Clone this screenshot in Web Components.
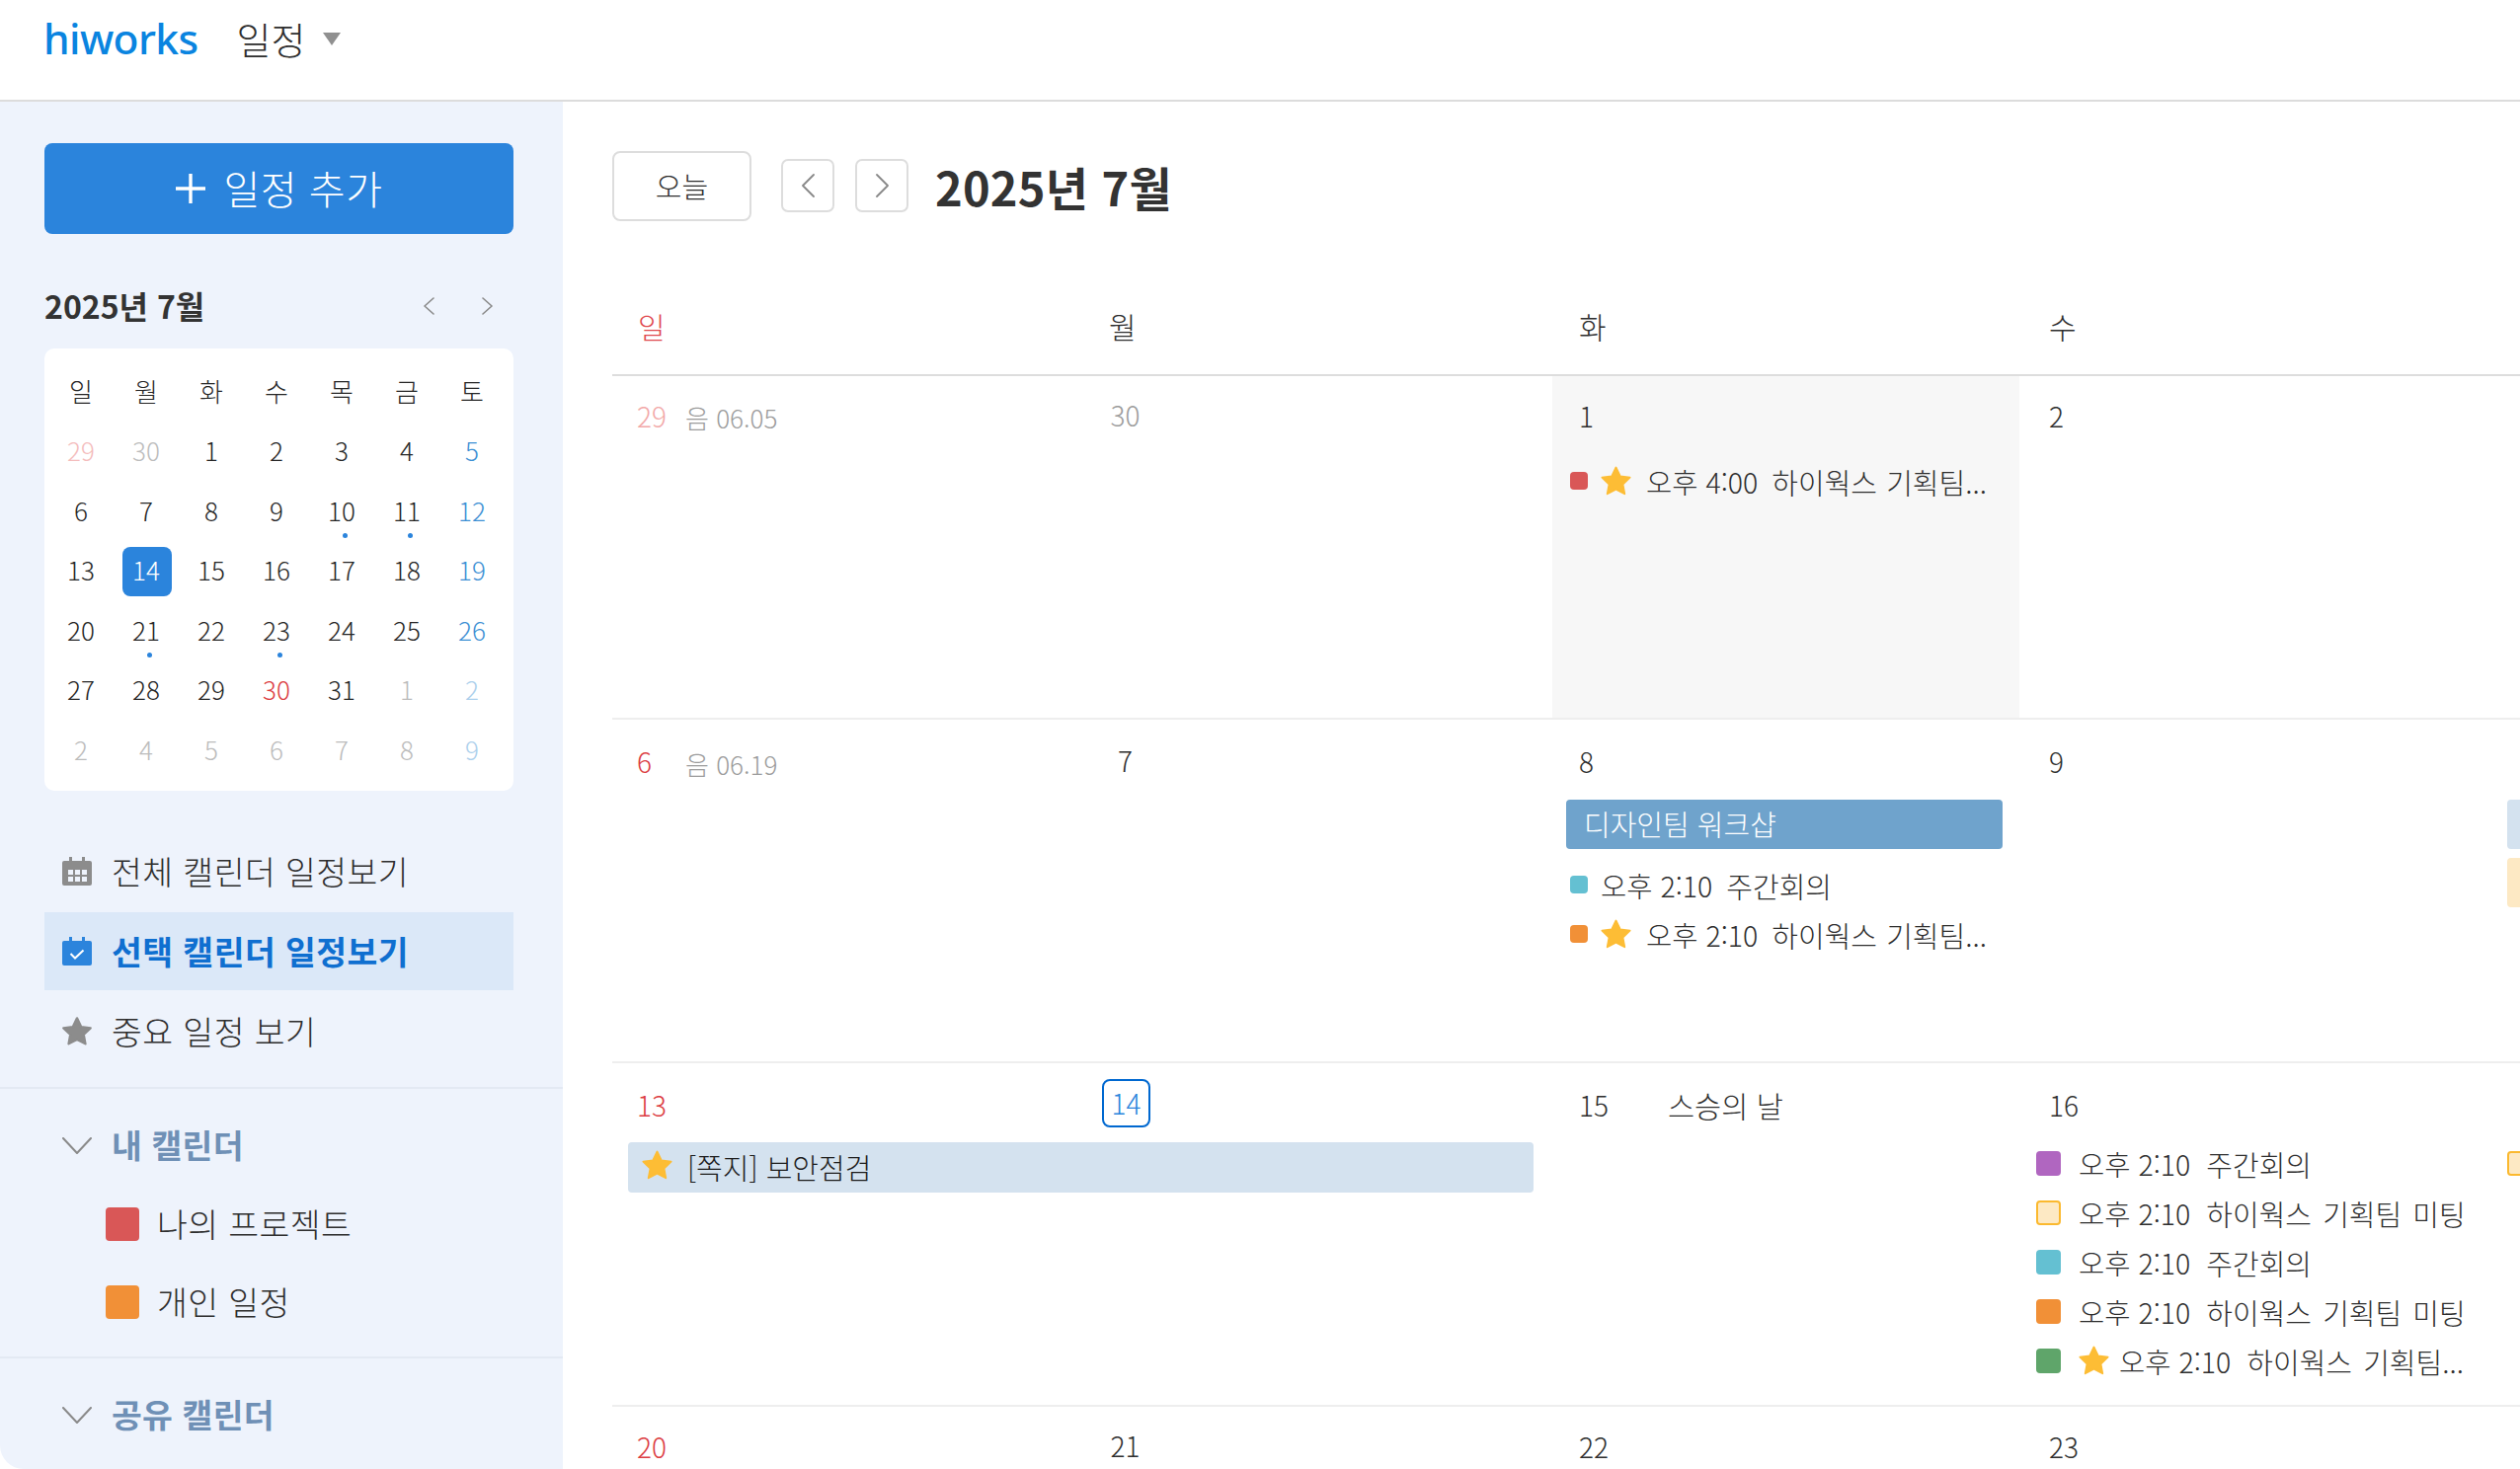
<!DOCTYPE html>
<html lang="ko"><head><meta charset="utf-8"><title>일정</title>
<style>
html,body{margin:0;padding:0;height:100%;overflow:hidden;background:#fff}
body{font-family:"Noto Sans CJK KR","Noto Sans",sans-serif;font-weight:300;color:#222;width:2552px;height:1488px}
</style></head><body>
<hw-app>
  <hw-topbar slot="top"></hw-topbar>
  <hw-sidebar slot="side">
    <hw-add-button></hw-add-button>
    <hw-minical></hw-minical>
    <hw-nav>
      <hw-nav-item icon="all">전체 캘린더 일정보기</hw-nav-item>
      <hw-nav-item icon="check" active>선택 캘린더 일정보기</hw-nav-item>
      <hw-nav-item icon="star">중요 일정 보기</hw-nav-item>
    </hw-nav>
    <hw-section title="내 캘린더">
      <hw-cal-item color="#d95757">나의 프로젝트</hw-cal-item>
      <hw-cal-item color="#f19037">개인 일정</hw-cal-item>
    </hw-section>
    <hw-section title="공유 캘린더"></hw-section>
  </hw-sidebar>
  <hw-month slot="main">
    <hw-week style="--ny:-2px">
      <hw-day num="29" tone="dimsun" col="1" lunar="음 06.05"></hw-day>
      <hw-day num="30" tone="dim" col="2" center></hw-day>
      <hw-day num="1" col="3" shade>
        <hw-event color="#d95757" small star time="오후 4:00">하이웍스 기획팀...</hw-event>
      </hw-day>
      <hw-day num="2" col="4"></hw-day>
      <hw-day col="5"></hw-day>
    </hw-week>
    <hw-week>
      <hw-day num="6" tone="sun" col="1" lunar="음 06.19" style="--ly:3px"></hw-day>
      <hw-day num="7" col="2" center></hw-day>
      <hw-day num="8" col="3" head="81">
        <hw-bar color="#6fa3cc" text="#fff" style="margin:0 20px 13px 14px">디자인팀 워크샵</hw-bar>
        <hw-event color="#64c0d2" small time="오후 2:10">주간회의</hw-event>
        <hw-event color="#f19037" small star time="오후 2:10">하이웍스 기획팀...</hw-event>
      </hw-day>
      <hw-day num="9" col="4"></hw-day>
      <hw-day col="5" head="81">
        <hw-bar color="#d4e2ef" style="margin:0 0 9px 15px"></hw-bar>
        <hw-bar color="#fde9c4" style="margin:0 0 0 15px"></hw-bar>
      </hw-day>
    </hw-week>
    <hw-week>
      <hw-day num="13" tone="sun" col="1" head="78"></hw-day>
      <hw-day num="14" tone="today" col="2" center head="78"></hw-day>
      <hw-day num="15" col="3" label="스승의 날" head="78"></hw-day>
      <hw-day num="16" col="4" head="78">
        <hw-event color="#b066c0" time="오후 2:10">주간회의</hw-event>
        <hw-event color="#fde9c4" edge="#fbb92f" time="오후 2:10">하이웍스 기획팀 미팅</hw-event>
        <hw-event color="#64c0d2" time="오후 2:10">주간회의</hw-event>
        <hw-event color="#f19037" time="오후 2:10">하이웍스 기획팀 미팅</hw-event>
        <hw-event color="#5fa56a" star time="오후 2:10">하이웍스 기획팀...</hw-event>
      </hw-day>
      <hw-day col="5" head="78"><hw-event color="#fde9c4" edge="#fbb92f" style="--pad:15px"></hw-event></hw-day>
      <hw-bar color="#d4e2ef" star style="grid-column:1/3;grid-row:1;margin:80px 19px 0 16px;--h:51px">[쪽지] 보안점검</hw-bar>
    </hw-week>
    <hw-week style="--ny:-2px">
      <hw-day num="20" tone="sun" col="1"></hw-day>
      <hw-day num="21" col="2" center></hw-day>
      <hw-day num="22" col="3"></hw-day>
      <hw-day num="23" col="4"></hw-day>
      <hw-day col="5"></hw-day>
    </hw-week>
  </hw-month>
</hw-app>
<script>
const STAR='M12 2.6l2.9 6 6.6.9-4.8 4.6 1.2 6.5L12 17.5l-5.9 3.1 1.2-6.5L2.5 9.5l6.6-.9z';
const STARVB='1.6 1.7 20.8 20';
function def(name,css,html,init){
  customElements.define(name,class extends HTMLElement{
    constructor(){super();this.attachShadow({mode:'open'});}
    connectedCallback(){
      const h=typeof html==='function'?html(this):html;
      this.shadowRoot.innerHTML='<style>'+css+'</style>'+h;
      if(init)init(this,this.shadowRoot);
    }
  });
}
const chev=(d,w,h,c,sw)=>`<svg width="${w}" height="${h}" viewBox="0 0 ${w} ${h}" fill="none" stroke="${c}" stroke-width="${sw}" stroke-linecap="round" stroke-linejoin="round"><polyline points="${d}"/></svg>`;

def('hw-app',`:host{display:grid;grid-template-columns:570px 1fr;grid-template-rows:103px 1385px;width:2552px;height:1488px;overflow:hidden}`,
 `<slot name="top"></slot><slot name="side"></slot><slot name="main"></slot>`);

def('hw-topbar',`:host{display:flex;grid-column:1/3;align-items:flex-start;height:103px;box-sizing:border-box;border-bottom:2px solid #dcdcdc;background:#fff;padding-left:44px}
 .logo{font:500 42.5px/78px "Noto Sans",sans-serif;color:#0a84e0;letter-spacing:-.6px}
 .t{font-size:38px;line-height:78px;color:#2e2e2e;margin-left:39px}
 .c{width:0;height:0;border-left:9px solid transparent;border-right:9px solid transparent;border-top:13px solid #909090;margin:33px 0 0 17px}`,
 `<span class="logo">hiworks</span><span class="t">일정</span><span class="c"></span>`);

def('hw-sidebar',`:host{display:block;background:#eef3fc;height:1385px;border-bottom-left-radius:24px;overflow:hidden;padding-top:42px;box-sizing:border-box}`,`<slot></slot>`);

def('hw-add-button',`:host{display:flex;align-items:center;justify-content:center;margin-left:45px;width:475px;height:92px;border-radius:8px;background:#2b84dc;color:#fff;font-size:40px;gap:19px;letter-spacing:.5px}
 svg{display:block}span{line-height:92px;margin-top:-2px}`,
 `<svg width="30" height="30" viewBox="0 0 30 30"><path d="M15 0v30M0 15h30" stroke="#fff" stroke-width="3.4"/></svg><span>일정 추가</span>`);

def('hw-minical',`:host{display:block;margin-left:45px;width:475px;margin-top:43px}
 .h{display:flex;align-items:center;height:60px;font-weight:700;font-size:32px;color:#333}
 .h b{font-weight:700;flex:1;margin-top:-3px}.h svg{display:block}.h svg+svg{margin:0 21px 0 48px}
 .card{background:#fff;border-radius:10px;margin-top:13px;height:448px;box-sizing:border-box;padding:12px 0 0 4px}
 .g{display:grid;grid-template-columns:repeat(7,66px);grid-auto-rows:60.5px;font-size:26px;color:#262626}
 .c{position:relative;display:flex;align-items:center;justify-content:center}
 .today{color:#fff}.today::before{content:"";position:absolute;left:calc(50% - 24px);top:calc(50% - 23px);width:50px;height:50px;border-radius:8px;background:#2b84dc}
 .c span{position:relative}
 .dot::after{content:"";position:absolute;width:5px;height:5px;border-radius:50%;background:#2b84dc;left:calc(50% + .5px);top:calc(50% + 24px)}
 .s{color:#3d90d4}.r{color:#dc3c42}.d{color:#bcbcbc}.ds{color:#f4bcbc}.dsa{color:#acd0ec}`,
 el=>{
  const wk=['일','월','화','수','목','금','토'];
  const rows=[['29:ds','30:d','1','2','3','4','5:s'],['6','7','8','9','10:dot','11:dot','12:s'],['13','14:today','15','16','17','18','19:s'],['20','21:dot','22','23:dot','24','25','26:s'],['27','28','29','30:r','31','1:d','2:dsa'],['2:d','4:d','5:d','6:d','7:d','8:d','9:dsa']];
  let cells=wk.map(w=>`<div class="c"><span>${w}</span></div>`).join('');
  rows.forEach(r=>r.forEach(v=>{const [n,k]=v.split(':');cells+=`<div class="c ${k||''}"><span>${n}</span></div>`;}));
  return `<div class="h"><b>2025년 7월</b>${chev('10,1 1,9 10,17',11,18,'#8a8a8a',1.6)}${chev('1,1 10,9 1,17',11,18,'#8a8a8a',1.6)}</div><div class="card"><div class="g">${cells}</div></div>`;
 });

def('hw-nav',`:host{display:flex;flex-direction:column;gap:2px;margin:42px 0 17px 45px;width:475px}`,`<slot></slot>`);

const ICONS={
 all:`<svg width="30" height="29" viewBox="0 0 30 29"><path d="M7 0h3v4h10V0h3v4h5a2 2 0 0 1 2 2v21a2 2 0 0 1-2 2H2a2 2 0 0 1-2-2V6a2 2 0 0 1 2-2h5z" fill="#8c8c8c"/><path fill="#eef3fc" d="M6 13h5v5H6zM13 13h5v5h-5zM20 13h5v5h-5zM6 20h5v5H6zM13 20h5v5h-5zM20 20h5v5h-5z"/></svg>`,
 check:`<svg width="30" height="29" viewBox="0 0 30 29"><path d="M7 0h3v4h10V0h3v4h5a2 2 0 0 1 2 2v21a2 2 0 0 1-2 2H2a2 2 0 0 1-2-2V6a2 2 0 0 1 2-2h5z" fill="#2b84dc"/><path d="M8.5 17l4.5 4.5 8.5-8" fill="none" stroke="#fff" stroke-width="2"/></svg>`,
 star:`<svg width="30" height="29" viewBox="${STARVB}"><path d="${STAR}" fill="#8c8c8c" stroke="#8c8c8c" stroke-width="1.6" stroke-linejoin="round"/></svg>`
};
def('hw-nav-item',`:host{display:flex;align-items:center;height:79px;padding-left:18px;font-size:33.5px;color:#2e2e2e;gap:20px;letter-spacing:.45px}
 :host([active]){background:#dbe8f8;color:#0f6fd0;font-weight:700}
 svg{display:block;flex:none}
 span{margin-top:-3px}`,
 el=>`${ICONS[el.getAttribute('icon')]}<span><slot></slot></span>`);

def('hw-section',`:host{display:block;border-top:2px solid #e3e9f3;padding:28px 0 16px}
 .h{display:flex;align-items:center;height:58px;padding-left:63px;gap:20px;font-size:33.5px;font-weight:700;color:#6f90b6;letter-spacing:.2px}
 .h span{margin-top:-3px}
 svg{display:block}.l{margin-top:11px}`,
 el=>`<div class="h">${chev('1,1 15,16 29,1',30,17,'#8a8a8a',2)}<span>${el.getAttribute('title')}</span></div><div class="l"><slot></slot></div>`);

def('hw-cal-item',`:host{display:flex;align-items:center;height:79px;padding-left:107px;gap:18px;font-size:33.5px;color:#2e2e2e;letter-spacing:.4px}
 i{display:block;width:34px;height:34px;border-radius:4px}
 span{margin-top:-3px}`,
 el=>`<i style="background:${el.getAttribute('color')}"></i><span><slot></slot></span>`);

def('hw-month',`:host{display:block;height:1385px;overflow:hidden;padding:50px 0 0 50px;box-sizing:border-box}
 .bar{display:flex;align-items:center;height:70px}
 .today{width:141px;height:71px;box-sizing:border-box;border:2px solid #ddd;border-radius:8px;display:flex;align-items:center;justify-content:center;font-size:29px;color:#2e2e2e}
 .nav{width:54px;height:54px;box-sizing:border-box;border:2px solid #ddd;border-radius:7px;display:flex;align-items:center;justify-content:center}
 .nav svg{display:block}
 h1{margin:0 0 0 27px;font-size:47px;font-weight:700;color:#333;letter-spacing:.2px}
 .head{display:grid;grid-template-columns:repeat(4,476px) 1fr;margin-top:71px;height:71px;padding-bottom:14px;border-bottom:2px solid #ddd;font-size:30px;color:#2e2e2e;align-items:center}
 .head span{padding-left:27px}.head .sun{color:#e0484e;padding-left:26px}`,
 `<div class="bar"><div class="today">오늘</div><div class="nav" style="margin-left:30px">${chev('13,1 2,12 13,23',15,24,'#888',1.8)}</div><div class="nav" style="margin-left:21px">${chev('2,1 13,12 2,23',15,24,'#888',1.8)}</div><h1>2025년 7월</h1></div>
 <div class="head"><span class="sun">일</span><span>월</span><span>화</span><span>수</span></div><slot></slot>`);

def('hw-week',`:host{display:grid;grid-template-columns:repeat(4,476px) 1fr;grid-template-rows:346px;height:348px;box-sizing:border-box;border-bottom:2px solid #eee}`,`<slot></slot>`);

def('hw-day',`:host{display:block;grid-row:1;min-width:0;box-sizing:border-box}
 :host([shade]){background:#f7f7f7;margin-right:3px}
 .head{display:flex;align-items:flex-start;font-size:28px;color:#2e2e2e;line-height:84px;padding-left:27px;white-space:nowrap;margin-top:var(--ny,0)}
 :host([center]) .head{padding-left:19px}
 :host([col="1"]) .head{padding-left:25px}
 .n{display:block}
 :host([center]) .n{width:49px;text-align:center}
 :host([center]) .n:not(.today){margin-top:-1px}
 .sun{color:#dc3c42}.dimsun{color:#f2a8a8}.dim{color:#9c9c9c}
 .today{box-sizing:border-box;height:49px;line-height:45px;border:2px solid #0068d0;border-radius:8px;color:#2b84dc;margin:16px 0 0 1px}
 .lunar{font-size:26px;color:#9c9c9c;position:absolute;left:74px;top:var(--ly,0)}
 .wrap{position:relative;display:flow-root}
 .label{margin-left:60px;font-size:29.5px}`,
 el=>{
  el.style.gridColumn=el.getAttribute('col');
  const n=el.getAttribute('num')||'',t=el.getAttribute('tone')||'',l=el.getAttribute('lunar'),lb=el.getAttribute('label'),hd=el.getAttribute('head')||'83';
  return `<div class="wrap" style="height:${hd}px"><div class="head">${n?`<span class="n ${t}">${n}</span>`:''}${l?`<span class="lunar">${l}</span>`:''}${lb?`<span class="label">${lb}</span>`:''}</div></div><slot></slot>`;
 });

def('hw-event',`:host{display:flex;align-items:center;height:50px;padding-left:var(--pad,14px);font-size:29px;color:#2e2e2e;white-space:nowrap;word-spacing:3px}
 :host([small]){padding-left:18px;word-spacing:1px}
 i{display:block;flex:none;width:25px;height:25px;box-sizing:border-box;border-radius:4px;margin:-4px 18px 0 0}
 :host([small]) i{width:18px;height:18px;margin-right:13px}
 svg{display:block;flex:none;margin:-4px 10px 0 0}
 :host([small]) svg{margin-right:15px}
 .x{display:flex;margin-top:-3px}
 .t{margin-right:16px;font-size:28.5px;word-spacing:0}
 :host([small]) .t{margin-right:14px}`,
 el=>{
  const c=el.getAttribute('color'),e=el.getAttribute('edge'),tm=el.getAttribute('time');
  return `<i style="background:${c};${e?`border:2px solid ${e}`:''}"></i>${el.hasAttribute('star')?`<svg width="31" height="30" viewBox="${STARVB}"><path d="${STAR}" fill="#fdbd35" stroke="#fdbd35" stroke-width="1.2" stroke-linejoin="round"/></svg>`:''}<div class="x">${tm?`<span class="t">${tm}</span>`:''}<slot></slot></div>`;
 });

def('hw-bar',`:host{display:flex;align-items:center;align-self:start;height:var(--h,50px);box-sizing:border-box;border-radius:4px;padding-left:18px;font-size:29px;white-space:nowrap;color:#1c1c1c}
 :host([star]){padding-left:14px}
 svg{display:block;flex:none;margin:-6px 15px 0 0}
 span{margin-top:-2px}`,
 el=>{
  el.style.background=el.getAttribute('color');
  if(el.getAttribute('text'))el.style.color=el.getAttribute('text');
  return `${el.hasAttribute('star')?`<svg width="31" height="30" viewBox="${STARVB}"><path d="${STAR}" fill="#fdbd35" stroke="#fdbd35" stroke-width="1.2" stroke-linejoin="round"/></svg>`:''}<span><slot></slot></span>`;
 });
</script>
</body></html>
